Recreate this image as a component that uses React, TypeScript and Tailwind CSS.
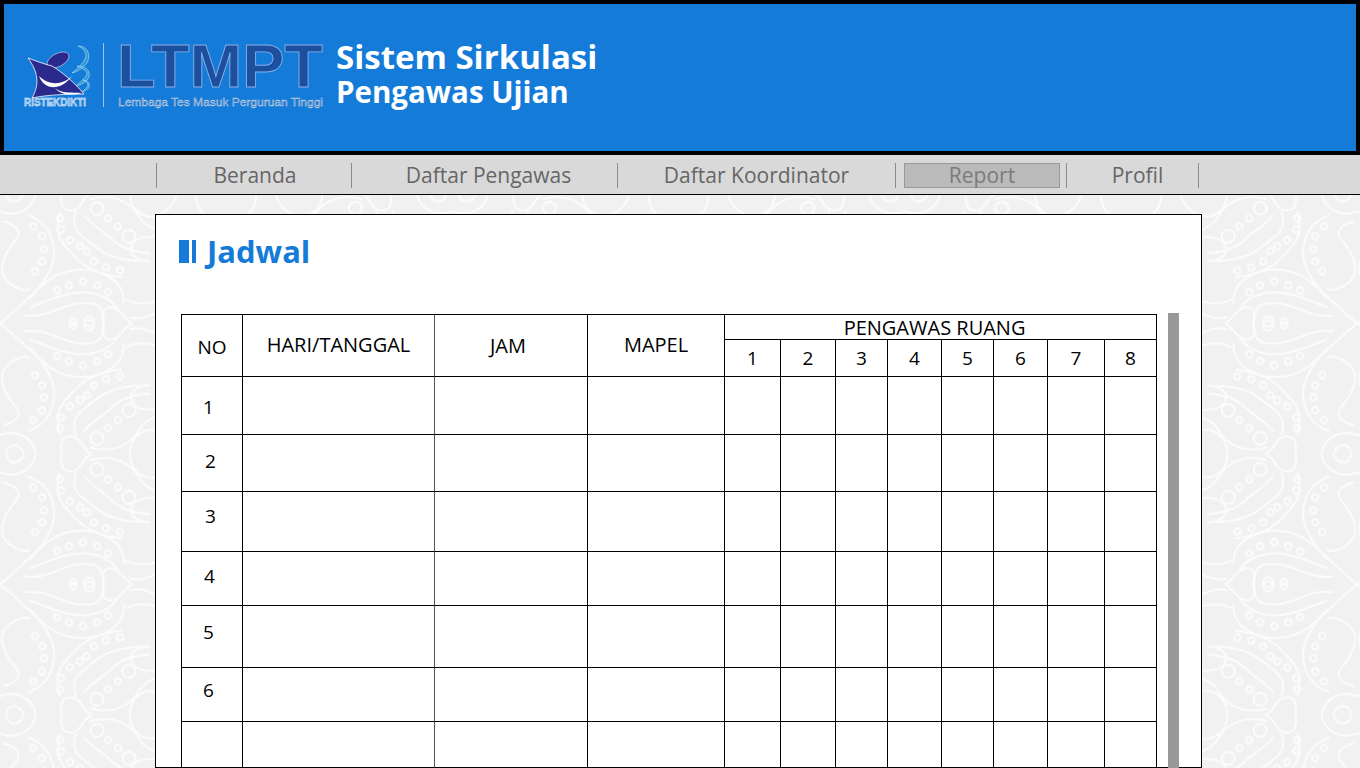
const navFont = "font-['Open_Sans','Noto_Sans',sans-serif]";

const pengawas = ["1", "2", "3", "4", "5", "6", "7", "8"];

const rows = [
  { no: "1", h: "h-[58px]", cls: "pl-[21px] pt-1" },
  { no: "2", h: "h-[57px]", cls: "pl-[23px] pb-1" },
  { no: "3", h: "h-[60px]", cls: "pl-[23px] pb-2.5" },
  { no: "4", h: "h-[54px]", cls: "pl-[22px] pb-1" },
  { no: "5", h: "h-[62px]", cls: "pl-[21px] pb-2" },
  { no: "6", h: "h-[54px]", cls: "pl-[21px] pb-2" },
  { no: "", h: "h-[46px]", cls: "" },
];

function Motif() {
  const dots = [
    [57, 33], [69, 38], [83, 42], [97, 38], [108, 31],
    [35, 52], [42, 62], [44, 74], [42, 87], [33, 97],
    [60, 105], [61, 94], [70, 83], [80, 77], [87, 72], [94, 62], [106, 56], [120, 53],
    [73, 2], [108, 105], [118, 97],
  ];
  const rings = [[89, 2, 5], [97, 115, 6.5], [129, 87, 6.5], [190, 100, 6], [175, 30, 5]];
  return (
    <g fill="none" stroke="#fcfcfc" strokeWidth="2">
      <path d="M0 0C20 16 34 32 50 44C64 54 88 58 106 48C118 42 124 34 124 20" />
      <path d="M30 25C44 40 56 58 54 74C52 92 44 102 28 108" />
      <path d="M30 35C24 30 8 38 3 48C0 58 4 70 17 85C21 92 18 98 3 102" />
      <path d="M0 112C14 106 32 112 36 130" />
      <path d="M6 130C8 120 18 118 24 130" />
      <path d="M24 8C50 4 62 22 88 20C104 20 102 8 104 0" />
      <path d="M30 16C50 24 72 34 92 30C106 28 114 20 118 14" />
      <path d="M132 0C124 4 120 16 110 16C102 16 102 6 104 0" />
      <path d="M130 6C145 2 150 10 165 12C178 14 190 10 198 2" />
      <path d="M126 24C140 16 156 22 172 26" />
      <path d="M92 130C84 128 84 122 80 118C74 110 62 112 62 120C60 124 62 130 62 130" />
      <path d="M60 112C56 96 56 86 68 74C80 60 90 50 122 46" />
      <path d="M76 112C72 100 74 92 86 84C100 72 110 64 140 62" />
      <path d="M90 124C110 130 130 124 140 105C146 96 158 92 170 90" />
      <path d="M84 108C92 98 104 92 112 84C120 76 130 72 150 70" />
      <path d="M150 62C136 62 128 70 132 78C136 88 150 86 170 88" />
      <path d="M130 130C130 110 150 100 165 112C178 122 176 130 176 130" />
      <path d="M196 130C196 108 210 104 226 104" />
      <path d="M160 40C185 50 205 62 226 60" />
      {dots.map(([x, y]) => (
        <circle key={`${x}-${y}`} cx={x} cy={y} r="3.2" />
      ))}
      {rings.map(([x, y, r]) => (
        <circle key={`${x}-${y}`} cx={x} cy={y} r={r} />
      ))}
    </g>
  );
}

function BatikBackground() {
  return (
    <svg className="absolute inset-0 h-full w-full" aria-hidden="true">
      <defs>
        <pattern
          id="batik"
          patternUnits="userSpaceOnUse"
          width="452.4"
          height="261"
          patternTransform="translate(-226.2 192.8)"
        >
          <g transform="translate(226.2 130.5)">
            <Motif />
            <g transform="scale(-1 1)"><Motif /></g>
            <g transform="scale(1 -1)"><Motif /></g>
            <g transform="scale(-1 -1)"><Motif /></g>
          </g>
        </pattern>
      </defs>
      <rect width="100%" height="100%" fill="#f1f1f1" />
      <rect width="100%" height="100%" fill="url(#batik)" />
    </svg>
  );
}

function Logo() {
  return (
    <svg width="310" height="96" viewBox="20 26 310 96" className="mb-[7px] shrink-0">
      {/* crescents */}
      <path d="M78 46C90 46 92 60 84 66C80 70 76 72 72 73C78 68 85 62 86 56C86 52 83 48 78 46Z" fill="#2f9bd6" stroke="#bfe0f5" strokeWidth="0.6" />
      <path d="M77 66C90 66 92 76 86 81C83 84 80 85 76 86C80 82 86 78 87 74C87 71 82 68 77 66Z" fill="#2f9bd6" stroke="#bfe0f5" strokeWidth="0.6" />
      <path d="M83 80C91 81 91 88 86 90C85 91 84 91 82 92C85 89 88 87 88 85C88 83 85 81 83 80Z" fill="#2f9bd6" stroke="#bfe0f5" strokeWidth="0.6" />
      {/* body */}
      <ellipse cx="58" cy="60" rx="12" ry="6.5" transform="rotate(-28 58 60)" fill="#2b2a8c" stroke="#cfd8f0" strokeWidth="0.6" />
      <path d="M28 58C36 61 44 64 52 66C62 72 74 82 84 94C66 94 46 95 32 98C40 84 38 72 28 58Z" fill="#2b2a8c" stroke="#e4eaf8" strokeWidth="0.9" />
      <path d="M39 76C44 90 60 92 72 76C64 84 50 87 39 76Z" fill="#ffffff" />
      <path d="M55 88C62 94 72 92 82 93C72 96 60 95 55 88Z" fill="#ffffff" />
      <text x="24" y="106" fontFamily="Liberation Sans, sans-serif" fontSize="10.5" fontWeight="700" textLength="62" lengthAdjust="spacingAndGlyphs" fill="#7db3e8" stroke="#ffffff" strokeWidth="0.4">RISTEKDIKTI</text>
      <rect x="103" y="43" width="1" height="64" fill="#9fc0e4" />
      <text x="117" y="87" fontFamily="Liberation Sans, sans-serif" fontSize="61" fontWeight="700" textLength="206" lengthAdjust="spacingAndGlyphs" fill="#1d4f9f" stroke="#86aee6" strokeWidth="0.9">LTMPT</text>
      <text x="118" y="106" fontFamily="Liberation Sans, sans-serif" fontSize="11.5" textLength="205" lengthAdjust="spacingAndGlyphs" fill="#6f8cb8" stroke="#d2deee" strokeWidth="0.35">Lembaga Tes Masuk Perguruan Tinggi</text>
    </svg>
  );
}

function Header() {
  return (
    <header className="flex h-[155px] shrink-0 items-center border-4 border-black bg-[#147bd8] pl-4">
      <Logo />
      <div className={`mb-[8px] ml-[6px] font-bold text-white ${navFont}`}>
        <div className="text-[33px] leading-[36px]">Sistem Sirkulasi</div>
        <div className="text-[29.5px] leading-[34px]">Pengawas Ujian</div>
      </div>
    </header>
  );
}

function Nav() {
  return (
    <nav className={`flex h-[40px] shrink-0 items-center border-b border-black bg-[#d9d9d9] pt-[2px] pl-[156px] text-[21px] text-[#666666] ${navFont}`}>
      <div className="flex h-[25px] w-[195px] items-center justify-center border-l border-[#8a8a8a] pl-0.5">Beranda</div>
      <div className="flex h-[25px] w-[266px] items-center justify-center border-l border-[#8a8a8a] pl-2">Daftar Pengawas</div>
      <div className="flex h-[25px] w-[278px] items-center justify-center border-l border-[#8a8a8a]">Daftar Koordinator</div>
      <div className="flex h-[25px] w-[172px] items-center border-x border-[#8a8a8a] pl-2">
        <div className="flex h-[25px] w-[156px] items-center justify-center border border-[#999999] bg-[#bababa] text-[#7a7a7a]">Report</div>
      </div>
      <div className="flex h-[25px] w-[132px] items-center justify-center border-r border-[#8a8a8a] pl-2.5">Profil</div>
    </nav>
  );
}

const th = "border-r border-b border-black font-normal";
const td = "border-r border-b border-black p-0";

function JadwalTable() {
  return (
    <table className="mt-px h-fit w-[976px] table-fixed border-separate border-spacing-0 border-t border-l border-black text-[20px] leading-none text-black">
      <colgroup>
        <col className="w-[61px]" />
        <col className="w-[192px]" />
        <col className="w-[153px]" />
        <col className="w-[137px]" />
        <col className="w-[56px]" />
        <col className="w-[55px]" />
        <col className="w-[52px]" />
        <col className="w-[54px]" />
        <col className="w-[52px]" />
        <col className="w-[54px]" />
        <col className="w-[57px]" />
        <col className="w-[52px]" />
      </colgroup>
      <thead>
        <tr className="h-[25px]">
          <th rowSpan={2} className={`${th} pt-1 text-[19px]`}>NO</th>
          <th rowSpan={2} className={`${th} border-r-[#555555] pb-0.5`}>HARI/TANGGAL</th>
          <th rowSpan={2} className={`${th} pr-1.5`}>JAM</th>
          <th rowSpan={2} className={`${th} pb-0.5`}>MAPEL</th>
          <th colSpan={8} className={`${th} pt-0.5 pr-3`}>PENGAWAS RUANG</th>
        </tr>
        <tr className="h-[37px]">
          {pengawas.map((n) => (
            <th key={n} className={`${th} text-[19px]`}>{n}</th>
          ))}
        </tr>
      </thead>
      <tbody>
        {rows.map((row, i) => (
          <tr key={i} className={row.h}>
            <td className={`${td} text-[19px] ${row.cls}`}>{row.no}</td>
            <td className={`${td} border-r-[#555555]`} />
            <td className={td} />
            <td className={td} />
            {pengawas.map((n) => (
              <td key={n} className={td} />
            ))}
          </tr>
        ))}
      </tbody>
    </table>
  );
}

export default function App() {
  return (
    <div className="relative flex h-[768px] flex-col overflow-hidden">
      <BatikBackground />
      <div className="relative flex h-full flex-col">
        <Header />
        <Nav />
        <main className={`mt-[19px] ml-[155px] flex min-h-0 w-[1047px] flex-1 flex-col border border-black bg-white pl-[25px] ${navFont}`}>
          <h1 className="flex h-[98px] shrink-0 items-start pt-[25px] text-[31px] leading-none font-bold text-[#147bd8]">
            <span className="ml-[-2px] flex h-[23px] gap-[3px]">
              <span className="w-[10px] bg-[#147bd8]" />
              <span className="w-[4px] bg-[#147bd8]" />
            </span>
            <span className="-mt-[4px] ml-[11px]">Jadwal</span>
          </h1>
          <div className="flex flex-1">
            <JadwalTable />
            <div className="-mb-px ml-[11px] w-[11px] bg-[#999999]" />
          </div>
        </main>
      </div>
    </div>
  );
}
